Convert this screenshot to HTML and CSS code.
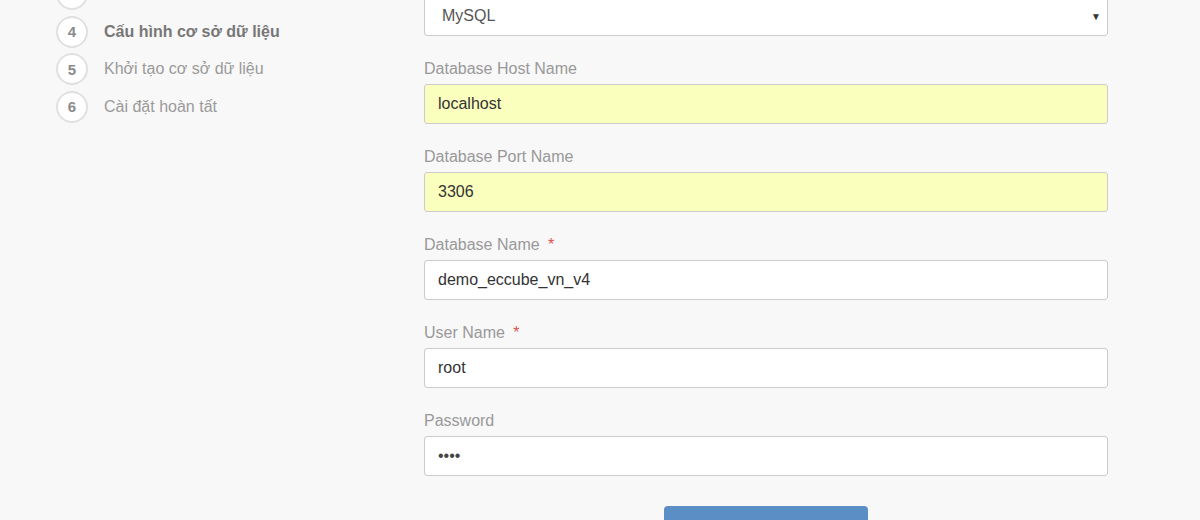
FILE: index.html
```html
<!DOCTYPE html>
<html lang="vi">
<head>
<meta charset="utf-8">
<title>Cài đặt</title>
<link rel="stylesheet" href="styles.css">
</head>
<body>
<div class="page">
  <aside class="steps">
    <div class="step"><span class="num"></span></div>
    <div class="step active"><span class="num">4</span><span class="txt">Cấu hình cơ sở dữ liệu</span></div>
    <div class="step"><span class="num">5</span><span class="txt">Khởi tạo cơ sở dữ liệu</span></div>
    <div class="step"><span class="num">6</span><span class="txt">Cài đặt hoàn tất</span></div>
  </aside>
  <main class="form">
    <div class="group">
      <div class="select"><span>MySQL</span><span class="caret">▼</span></div>
    </div>
    <div class="group">
      <div class="label">Database Host Name</div>
      <div class="input autofill">localhost</div>
    </div>
    <div class="group">
      <div class="label">Database Port Name</div>
      <div class="input autofill">3306</div>
    </div>
    <div class="group">
      <div class="label">Database Name <span class="req">*</span></div>
      <div class="input">demo_eccube_vn_v4</div>
    </div>
    <div class="group">
      <div class="label">User Name <span class="req">*</span></div>
      <div class="input">root</div>
    </div>
    <div class="group">
      <div class="label">Password</div>
      <div class="input pw">••••</div>
    </div>
    <div class="actions"><div class="btn"></div></div>
  </main>
</div>
</body>
</html>
```

FILE: styles.css
```css
html, body {
  margin: 0;
  padding: 0;
  background: #f8f8f8;
  font-family: "Liberation Sans", Arial, sans-serif;
  font-size: 16px;
  overflow: hidden;
}
.page {
  display: flex;
  margin-top: -45px;
  padding-left: 56px;
}
.steps {
  width: 368px;
  display: flex;
  flex-direction: column;
  gap: 5.5px;
  padding-top: 23px;
}
.step {
  display: flex;
  align-items: center;
  gap: 16px;
  color: #9a9a9a;
  height: 32px;
}
.num {
  box-sizing: border-box;
  width: 32px;
  height: 32px;
  border: 2px solid #e0e0e0;
  border-radius: 50%;
  background: #fff;
  display: flex;
  align-items: center;
  justify-content: center;
  font-weight: bold;
  color: #8a8a8a;
  font-size: 15px;
}
.step.active .txt {
  font-weight: bold;
  color: #777;
}
.form {
  width: 684px;
  padding-top: 41px;
}
.group {
  margin-bottom: 21px;
}
.label {
  color: #999;
  line-height: 22px;
  padding-top: 1px;
  margin-bottom: 4px;
}
.req {
  color: #d9534f;
  margin-left: 4px;
}
.input, .select {
  box-sizing: border-box;
  height: 40px;
  border: 1px solid #ccc;
  border-radius: 3px;
  background: #fff;
  padding: 0 13px;
  display: flex;
  align-items: center;
  color: #333;
}
.autofill {
  background: #faffbd;
}
.select {
  justify-content: space-between;
  padding-left: 17px;
  padding-right: 6px;
  color: #555;
}
.caret {
  font-size: 10px;
  color: #333;
}
.pw {
  font-size: 16px;
  color: #444;
}
.actions {
  display: flex;
  justify-content: center;
  padding-top: 9px;
}
.btn {
  width: 204px;
  height: 40px;
  background: #5b8ec4;
  border-radius: 4px;
}
```
